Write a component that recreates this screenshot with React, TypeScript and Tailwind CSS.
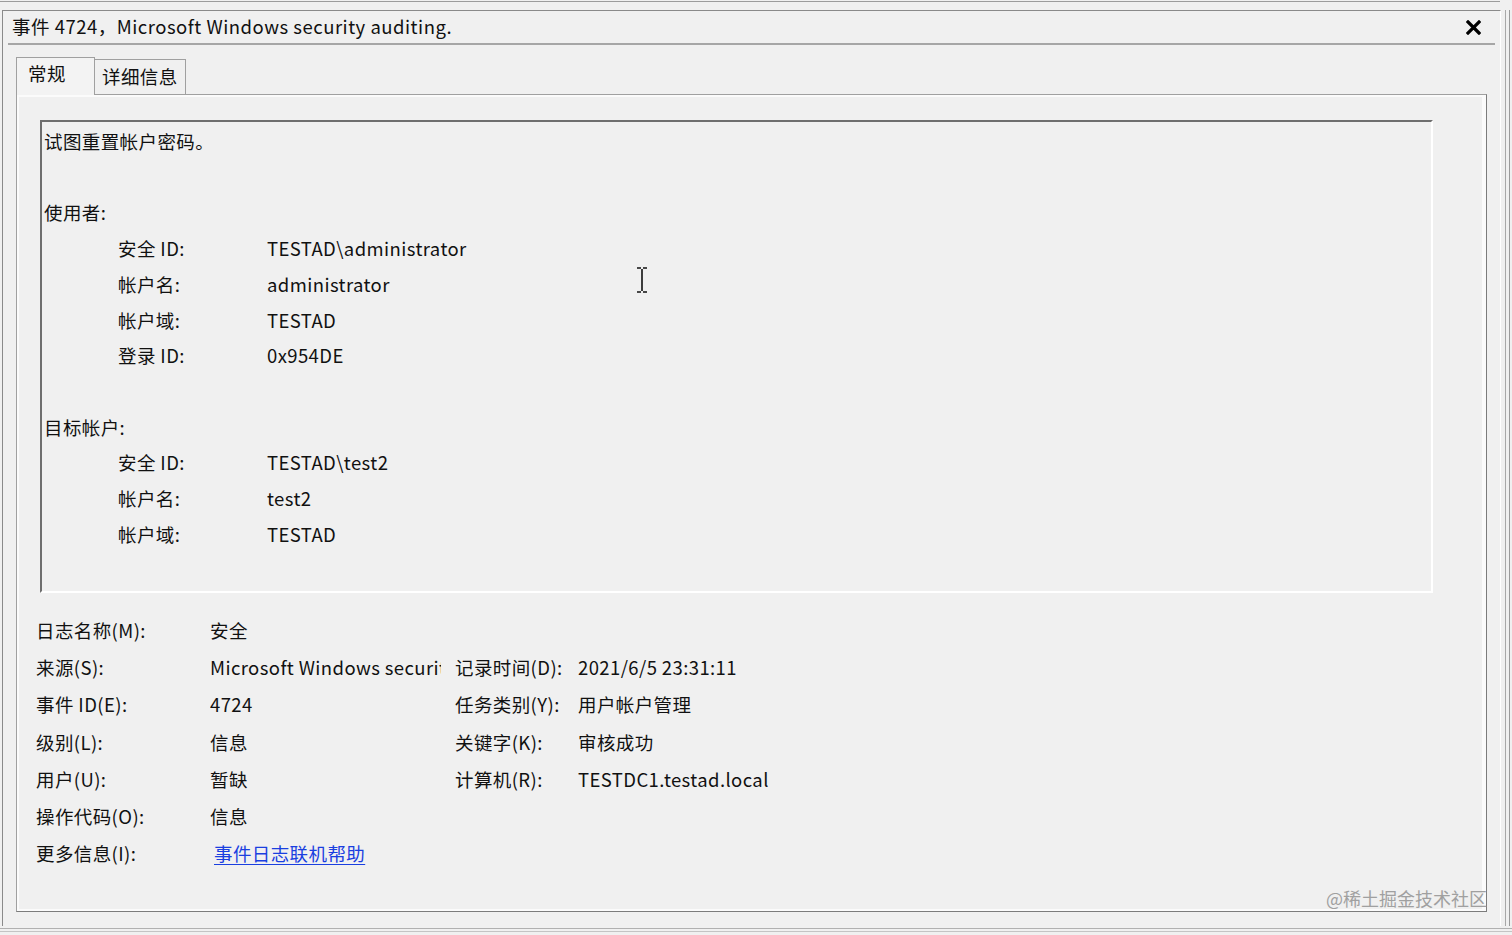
const font = "font-['Noto_Sans_CJK_SC','Microsoft_YaHei',sans-serif]";

const userRows = [
  ['安全 ID:', 'TESTAD\\administrator'],
  ['帐户名:', 'administrator'],
  ['帐户域:', 'TESTAD'],
  ['登录 ID:', '0x954DE'],
];

const targetRows = [
  ['安全 ID:', 'TESTAD\\test2'],
  ['帐户名:', 'test2'],
  ['帐户域:', 'TESTAD'],
];

type Field = { label: string; value: React.ReactNode; label2?: string; value2?: string };

const fields: Field[] = [
  { label: '日志名称(M):', value: '安全' },
  { label: '来源(S):', value: 'Microsoft Windows security auditing.', label2: '记录时间(D):', value2: '2021/6/5 23:31:11' },
  { label: '事件 ID(E):', value: '4724', label2: '任务类别(Y):', value2: '用户帐户管理' },
  { label: '级别(L):', value: '信息', label2: '关键字(K):', value2: '审核成功' },
  { label: '用户(U):', value: '暂缺', label2: '计算机(R):', value2: 'TESTDC1.testad.local' },
  { label: '操作代码(O):', value: '信息' },
  {
    label: '更多信息(I):',
    value: <span className="ml-[4px] text-[#1a3fe0] underline underline-offset-[3px]">事件日志联机帮助</span>,
  },
];

function DetailRow({ label, value }: { label: string; value: string }) {
  return (
    <div className="flex pl-[74px]">
      <span className="w-[149px] shrink-0">{label}</span>
      <span>{value}</span>
    </div>
  );
}

export default function App() {
  return (
    <div className={`relative h-[935px] w-[1512px] overflow-hidden bg-[#f0f0f0] text-[18.5px] tracking-[0.4px] text-[#111] ${font}`}>
      {/* top edge */}
      <div className="mt-px h-px w-[1500px] bg-[#9c9c9c]" />

      <div className="mt-[8px] flex h-[916px]">
        {/* window frame */}
        <div className="ml-[2px] w-[1499px] border-l border-t border-[#8a8a8a] border-r border-r-white">
          {/* title bar */}
          <div className="ml-[5px] flex h-[34px] w-[1487px] items-center justify-between border-b-2 border-[#a6a6a6] pl-[4px] pr-[14px]">
            <span className="whitespace-nowrap tracking-[0.5px]">事件 4724，Microsoft Windows security auditing.</span>
            <svg width="15" height="15" viewBox="0 0 15 15">
              <path d="M2 2 L13 13 M13 2 L2 13" stroke="#000" strokeWidth="3.2" strokeLinecap="square" />
            </svg>
          </div>

          {/* tabs */}
          <div className="ml-[13px] mt-[12px] flex h-[37px] items-end">
            <div className="relative z-10 -mb-px h-[38px] w-[79px] border-l border-r border-t border-[#a0a0a0] bg-[#f3f3f3] pl-[11px] pt-[3px] leading-[24px]">
              常规
            </div>
            <div className="h-[35px] w-[91px] border-r border-t border-[#a0a0a0] pl-[7px] pt-[4px] leading-[24px]">
              详细信息
            </div>
          </div>

          {/* tab panel */}
          <div className="ml-[13px] h-[818px] w-[1471px] border border-[#a0a0a0] border-b-[#7c7c7c] border-r-[#7c7c7c] shadow-[inset_2px_2px_0_#fbfbfb,inset_-4px_-2px_0_#fbfbfb]">
            {/* description box */}
            <div className="ml-[23px] mt-[25px] h-[473px] w-[1393px] border-2 border-b-white border-l-[#6e6e6e] border-r-white border-t-[#6e6e6e] pl-[2px] pt-[2px] leading-[35.7px]">
              <div>试图重置帐户密码。</div>
              <div className="h-[35.7px]" />
              <div>使用者:</div>
              {userRows.map(([l, v]) => (
                <DetailRow key={l} label={l} value={v} />
              ))}
              <div className="h-[35.7px]" />
              <div>目标帐户:</div>
              {targetRows.map(([l, v]) => (
                <DetailRow key={l} label={l} value={v} />
              ))}
            </div>

            {/* fields */}
            <div className="ml-[19px] mt-[19px] leading-[37.2px]">
              {fields.map((f) => (
                <div key={f.label} className="flex whitespace-nowrap">
                  <span className="w-[174px] shrink-0">{f.label}</span>
                  <span className="w-[231px] shrink-0 overflow-hidden">{f.value}</span>
                  {f.label2 && (
                    <>
                      <span className="ml-[14px] w-[123px] shrink-0">{f.label2}</span>
                      <span>{f.value2}</span>
                    </>
                  )}
                </div>
              ))}
            </div>
          </div>
        </div>

        {/* outer right edges */}
        <div className="ml-[4px] w-px bg-[#a8a8a8]" />
        <div className="ml-[3px] w-px bg-[#9a9a9a]" />
      </div>

      {/* bottom edges */}
      <div className="mt-[2px] h-px w-full bg-[#b0b0b0]" />
      <div className="mt-[2px] h-px w-full bg-[#c4c4c4]" />

      {/* text cursor */}
      <svg className="absolute left-[636px] top-[267px]" width="12" height="26" viewBox="0 0 12 26">
        <path d="M1 1 H5 M7 1 H11 M6 2 V24 M1 25 H5 M7 25 H11" stroke="#111" strokeWidth="1.6" fill="none" />
      </svg>

      {/* watermark */}
      <div className="absolute left-[1326px] top-[885px] text-[18px] leading-[26px] tracking-normal text-[#a0a0a0]">@稀土掘金技术社区</div>
    </div>
  );
}
